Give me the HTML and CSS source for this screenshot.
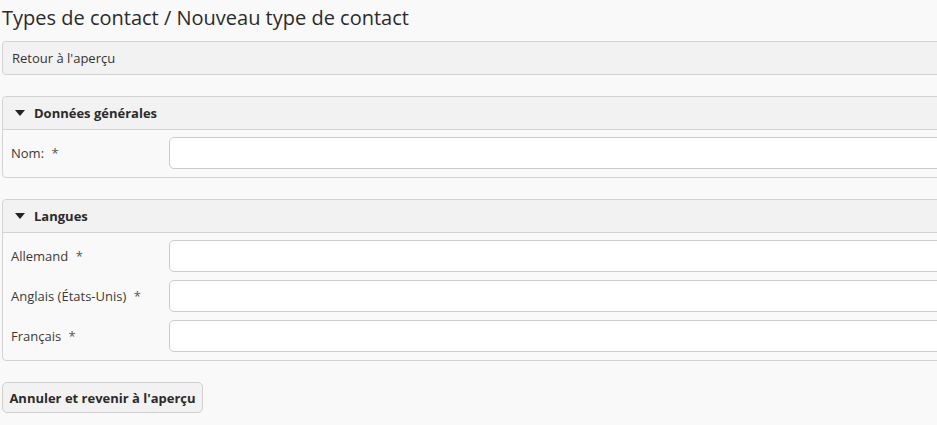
FILE: index.html
```html
<!DOCTYPE html>
<html lang="fr">
<head>
<meta charset="utf-8">
<title>Nouveau type de contact</title>
<link rel="stylesheet" href="styles.css">
</head>
<body>
<div class="page">
  <h1 class="title">Types de contact / Nouveau type de contact</h1>
  <div class="backbar">Retour à l'aperçu</div>

  <section class="panel">
    <div class="panel-head"><span class="caret"></span>Données générales</div>
    <div class="panel-body">
      <div class="row">
        <label class="label">Nom: <span class="req">*</span></label>
        <input class="field" type="text">
      </div>
    </div>
  </section>

  <section class="panel">
    <div class="panel-head"><span class="caret"></span>Langues</div>
    <div class="panel-body">
      <div class="row">
        <label class="label">Allemand <span class="req">*</span></label>
        <input class="field" type="text">
      </div>
      <div class="row">
        <label class="label">Anglais (États-Unis) <span class="req">*</span></label>
        <input class="field" type="text">
      </div>
      <div class="row">
        <label class="label">Français <span class="req">*</span></label>
        <input class="field" type="text">
      </div>
    </div>
  </section>

  <button class="btn" type="button">Annuler et revenir à l'aperçu</button>
</div>
</body>
</html>
```
FILE: styles.css
```css
html, body {
  margin: 0;
  padding: 0;
  background: #f9f9f9;
  overflow: hidden;
}
body {
  font-family: "Open Sans", "Noto Sans", sans-serif;
  color: #333;
  font-size: 13px;
}
.page {
  width: 1100px;
  padding: 0 2px;
}
.title {
  font-size: 20px;
  font-weight: 400;
  line-height: 24px;
  margin: 6px 0 11px;
  color: #2b2b2b;
}
.backbar {
  height: 32px;
  border: 1px solid #d3d3d3;
  border-radius: 4px;
  background: #f2f2f2;
  padding: 0 9px;
  display: flex;
  align-items: center;
  color: #333;
}
.panel {
  margin-top: 21px;
  border: 1px solid #d3d3d3;
  border-radius: 4px;
  background: #f9f9f9;
}
.panel-head {
  height: 32px;
  background: #f2f2f2;
  border-bottom: 1px solid #d3d3d3;
  border-radius: 4px 4px 0 0;
  display: flex;
  align-items: center;
  padding-left: 12px;
  font-weight: 700;
  color: #2b2b2b;
}
.caret {
  width: 0;
  height: 0;
  border-left: 5px solid transparent;
  border-right: 5px solid transparent;
  border-top: 6px solid #222;
  margin-right: 9px;
}
.panel-body {
  padding: 7px 0 8px 8px;
  display: flex;
  flex-direction: column;
  gap: 8px;
}
.row {
  display: grid;
  grid-template-columns: 158px 1fr;
  align-items: center;
}
.label {
  color: #3a3a3a;
}
.req {
  margin-left: 4px;
  color: #555;
}
.field {
  height: 32px;
  box-sizing: border-box;
  border: 1px solid #cbcbcb;
  border-radius: 5px;
  background: #fff;
  margin: 0;
}
.btn {
  margin-top: 21px;
  height: 31px;
  width: 201px;
  border: 1px solid #d0d0d0;
  border-radius: 5px;
  background: #f2f2f2;
  font-family: inherit;
  font-size: 13px;
  font-weight: 700;
  color: #2b2b2b;
  padding: 0;
}
```
